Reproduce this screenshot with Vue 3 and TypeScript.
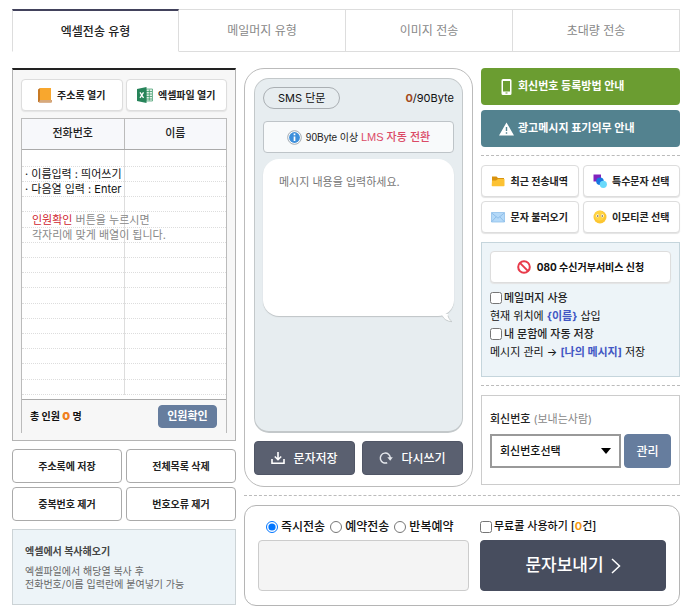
<script setup lang="ts">
import { ref } from 'vue'

const tabs: string[] = ['엑셀전송 유형', '메일머지 유형', '이미지 전송', '초대량 전송']
const activeTab = ref(0)
const listActions: string[] = ['주소록에 저장', '전체목록 삭제', '중복번호 제거', '번호오류 제거']
const sendModes: string[] = ['즉시전송', '예약전송', '반복예약']
const sendMode = ref('즉시전송')
const mailMerge = ref(false)
const autoSave = ref(false)
const freeCall = ref(false)
const message = ref('')
const sender = ref('')
const rowCount = 16
</script>

<template>
  <div class="page">
    <nav class="tabs">
      <button
        v-for="(tab, i) in tabs"
        :key="tab"
        type="button"
        class="tab"
        :class="{ active: i === activeTab }"
        @click="activeTab = i"
      >{{ tab }}</button>
    </nav>

    <main class="layout">
      <section class="left">
        <div class="book">
          <div class="pair tight">
            <button type="button" class="btn soft">
              <svg width="14" height="15" viewBox="0 0 14 15">
                <path d="M2 0h11v14H2z" fill="#f8a72e" />
                <path d="M0 1.5 2 0v13L0 14z" fill="#c87a24" />
                <path d="M0 13.2 2 12h11.6v2.6H1z" fill="#b96c26" />
                <path d="M2 12.6h11v1H1z" fill="#f6e6cf" />
              </svg>
              주소록 열기
            </button>
            <button type="button" class="btn soft">
              <svg width="16" height="16" viewBox="0 0 16 16">
                <path d="M9 2h6.500v12H9z" fill="#e3f1e9" stroke="#3b9a68" stroke-width=".7" />
                <path d="M9 4.500h6M9 7h6M9 9.500h6M9 12h6M12.300 2.500v11" stroke="#3b9a68" stroke-width=".8" />
                <path d="M0 2 9.500 0v16L0 14z" fill="#27845a" />
                <path d="m3 5.300 3.500 5.500M6.500 5.300 3 10.800" stroke="#fff" stroke-width="1.300" />
              </svg>
              엑셀파일 열기
            </button>
          </div>

          <div class="sheet">
            <table>
              <thead>
                <tr><th scope="col">전화번호</th><th scope="col">이름</th></tr>
              </thead>
              <tbody>
                <tr v-for="n in rowCount" :key="n"><td></td><td></td></tr>
              </tbody>
            </table>
            <div class="hint">
              <p>· 이름입력 : 띄어쓰기</p>
              <p>· 다음열 입력 : Enter</p>
              <p class="sub gap"><em>인원확인</em> 버튼을 누르시면</p>
              <p class="sub">각자리에 맞게 배열이 됩니다.</p>
            </div>
            <div class="total">
              <strong>총 인원 <b>0</b> 명</strong>
              <button type="button" class="btn blue count">인원확인</button>
            </div>
          </div>
        </div>

        <div class="pair actions">
          <button v-for="a in listActions" :key="a" type="button" class="btn line">{{ a }}</button>
        </div>

        <aside class="paste">
          <h3>엑셀에서 복사해오기</h3>
          <p>엑셀파일에서 해당열 복사 후<br />전화번호/이름 입력란에 붙여넣기 가능</p>
        </aside>
      </section>

      <section class="right">
        <div class="upper">
          <div class="phone">
            <div class="screen">
              <div class="status">
                <span class="pill">SMS 단문</span>
                <span class="bytes"><b>0</b>/90Byte</span>
              </div>
              <div class="notice">
                <svg width="15" height="15" viewBox="0 0 15 15">
                  <circle cx="7.500" cy="7.500" r="6.800" fill="#fff" stroke="#8c969e" stroke-width=".8" />
                  <circle cx="7.500" cy="7.500" r="5.400" fill="#3d8fdb" />
                  <path d="M7.500 6.500v4.500M7.500 3.600v1.700" stroke="#fff" stroke-width="1.700" />
                </svg>
                <span>90Byte 이상 <b>LMS 자동 전환</b></span>
              </div>
              <div class="bubble">
                <textarea v-model="message" aria-label="메시지 내용" placeholder="메시지 내용을 입력하세요."></textarea>
                <svg class="tail" width="13" height="9" viewBox="0 0 13 9">
                  <path d="M0 0c2 4.500 5 7 11 7.500C8.500 5.500 7 3 7 0z" fill="#fff" />
                  <path d="M1 1.500c2 4 5 5.800 10 6.200C8.800 6 7.200 3.500 7 1.500" fill="none" stroke="#c3c8ca" stroke-width=".9" />
                </svg>
              </div>
            </div>
            <div class="phone-actions">
              <button type="button" class="btn dark">
                <svg width="14" height="14" viewBox="0 0 14 14" fill="none" stroke="#fff" stroke-width="1.600">
                  <path d="M1 8v4.200h12V8M7 1v7.500M3.800 5.500 7 8.700l3.200-3.200" />
                </svg>
                문자저장
              </button>
              <button type="button" class="btn dark">
                <svg width="14" height="14" viewBox="0 0 14 14" fill="none" stroke="#e4e7ec" stroke-width="1.500">
                  <path d="M8.200 11.700A5 5 0 1 1 11.300 7" />
                  <path d="M8.300 6.200h5.500L11.200 9.800z" fill="#e4e7ec" stroke="none" />
                </svg>
                다시쓰기
              </button>
            </div>
          </div>

          <div class="side">
            <div class="guides">
              <a href="#" class="guide green">
                <svg width="15" height="16" viewBox="0 0 15 16">
                  <path fill-rule="evenodd" d="M4 0h7a1.500 1.500 0 0 1 1.500 1.500v13A1.500 1.500 0 0 1 11 16H4a1.500 1.500 0 0 1-1.500-1.500v-13A1.500 1.500 0 0 1 4 0zm0 2v10.500h7V2zm2.500 11.500v1h2v-1z" fill="#fff" />
                </svg>
                회신번호 등록방법 안내
              </a>
              <a href="#" class="guide teal">
                <svg width="15" height="14" viewBox="0 0 15 14">
                  <path fill-rule="evenodd" d="M7.500.5 15 13.500H0zM6.800 5v4h1.400V5zm0 5.200v1.500h1.400v-1.500z" fill="#fff" />
                </svg>
                광고메시지 표기의무 안내
              </a>
            </div>

            <hr />

            <div class="pair tools">
              <button type="button" class="btn soft">
                <svg width="14" height="14" viewBox="0 0 14 14">
                  <path d="M1 2.500h4.500L7 4h6v3H1z" fill="#d9930f" />
                  <path d="M1 6.500h4L7 5h6.500v6.500a.8.8 0 0 1-.8.8H1.500a.8.8 0 0 1-.8-.8z" fill="#fcc233" />
                </svg>
                최근 전송내역
              </button>
              <button type="button" class="btn soft">
                <svg width="14" height="14" viewBox="0 0 14 14">
                  <path d="M.5.5h7.500v7H.5z" fill="#8224bd" />
                  <circle cx="7" cy="7.200" r="3.800" fill="#1878e0" />
                  <circle cx="10.300" cy="10.300" r="3.600" fill="#69d9fb" />
                </svg>
                특수문자 선택
              </button>
              <button type="button" class="btn soft">
                <svg width="14" height="14" viewBox="0 0 14 14">
                  <path d="M.5 2.500h13v9.500H.5z" fill="#b4d9f8" stroke="#8fc0ea" stroke-width=".8" />
                  <path d="M.7 3 7 8.200 13.300 3M.7 11.700 5.200 6.800M13.300 11.700 8.800 6.800" fill="none" stroke="#7fb3e2" stroke-width=".7" />
                </svg>
                문자 불러오기
              </button>
              <button type="button" class="btn soft">
                <svg width="14" height="14" viewBox="0 0 14 14">
                  <circle cx="7" cy="7" r="6.500" fill="#fcc632" />
                  <circle cx="6.300" cy="5.800" r="5" fill="#ffd443" />
                  <ellipse cx="4.600" cy="5.800" rx="1.400" ry="1.600" fill="#fff" />
                  <ellipse cx="9.400" cy="5.800" rx="1.400" ry="1.600" fill="#fff" />
                  <circle cx="4.700" cy="6" r=".8" fill="#5b4a2a" />
                  <circle cx="9.300" cy="6" r=".8" fill="#5b4a2a" />
                </svg>
                이모티콘 선택
              </button>
            </div>

            <div class="options">
              <button type="button" class="btn soft reject">
                <svg width="14" height="14" viewBox="0 0 14 14" fill="none" stroke="#e83a4a" stroke-width="2">
                  <circle cx="7" cy="7" r="5.800" />
                  <path d="m2.900 2.900 8.200 8.200" />
                </svg>
                080 수신거부서비스 신청
              </button>
              <label class="check"><input v-model="mailMerge" type="checkbox" />메일머지 사용</label>
              <p>현재 위치에 <b>{이름}</b> 삽입</p>
              <label class="check"><input v-model="autoSave" type="checkbox" />내 문함에 자동 저장</label>
              <p>메시지 관리 → <b>[나의 메시지]</b> 저장</p>
            </div>

            <hr />

            <div class="sender">
              <label for="sender">회신번호 <span>(보내는사람)</span></label>
              <div class="sender-row">
                <div class="select">
                  <select id="sender" v-model="sender">
                    <option value="">회신번호선택</option>
                  </select>
                  <svg width="10" height="6" viewBox="0 0 10 6"><path d="M0 0h10L5 6z" fill="#000" /></svg>
                </div>
                <button type="button" class="btn blue manage">관리</button>
              </div>
            </div>
          </div>
        </div>

        <hr />

        <div class="send">
          <div class="when">
            <div class="modes">
              <label v-for="m in sendModes" :key="m">
                <input v-model="sendMode" type="radio" name="mode" :value="m" />{{ m }}
              </label>
            </div>
            <input class="reserve" type="text" aria-label="예약 시간" disabled />
          </div>
          <div class="go">
            <label class="free"><input v-model="freeCall" type="checkbox" /><span>무료콜 사용하기 [<b>0</b>건]</span></label>
            <button type="button" class="btn submit">
              문자보내기
              <svg width="10" height="16" viewBox="0 0 10 16" fill="none" stroke="#fff" stroke-width="1.500"><path d="m1 1 7.500 7L1 15" /></svg>
            </button>
          </div>
        </div>
      </section>
    </main>
  </div>
</template>

<style>
body {
  background: #fff;
}
</style>

<style scoped>
.page,
.page * {
  box-sizing: border-box;
}
.page {
  padding: 9px 10px 10px 12px;
  color: #222;
  font-family: Inter, "Noto Sans CJK KR", sans-serif;
  font-size: 11px;
  line-height: 17px;
}
button,
input,
select,
textarea {
  margin: 0;
  font: inherit;
  color: inherit;
}
p,
h3 {
  margin: 0;
}
svg {
  flex: none;
}
.tabs {
  display: grid;
  grid-template-columns: repeat(4, 1fr);
}
.tab {
  height: 43px;
  padding: 0;
  border: 1px solid #ddd;
  border-left-width: 0;
  background: #fff;
  color: #888;
  font-size: 12px;
}
.tab.active {
  border-top: 2px solid #42425c;
  border-left-width: 1px;
  border-bottom-color: transparent;
  color: #222;
  font-weight: 500;
}
.layout {
  display: grid;
  grid-template-columns: 224fr 436fr;
  align-items: start;
  gap: 8px;
  margin-top: 16px;
}
.btn {
  display: flex;
  align-items: center;
  justify-content: center;
  padding: 0;
  border: 1px solid #ddd;
  border-radius: 4px;
  background: #fff;
  font-size: 11px;
  font-weight: 500;
  white-space: nowrap;
  cursor: pointer;
}
.btn.soft {
  gap: 5px;
  height: 32px;
  font-size: 10px;
  font-weight: 700;
  box-shadow: 0 1px 1px #e4e4e4;
}
.btn.blue {
  border-color: #667d9e;
  background: #667d9e;
  color: #fff;
  font-weight: 700;
}
.btn.line {
  height: 34px;
  border-color: #aaa;
  font-size: 10px;
  font-weight: 700;
}
.pair {
  display: grid;
  grid-template-columns: 1fr 1fr;
  gap: 4px;
}
.pair.tight {
  gap: 3px;
}
.book {
  padding: 9px 8px 7px;
  border: 1px solid #b4b4b4;
  border-top: 2px solid #222;
  background: #f7f7f7;
}
.sheet {
  position: relative;
  margin-top: 7px;
  border: 1px solid #bbb;
  border-bottom: 0;
  background: #fff;
}
table {
  width: 100%;
  height: 276px;
  border-collapse: collapse;
}
th {
  width: 50%;
  height: 30px;
  padding: 0;
  border-bottom: 1px solid #aaa;
  background: #f7f8fb;
  font-weight: 500;
}
th + th {
  border-left: 1px solid #bbb;
}
td {
  height: 15px;
  padding: 0;
  border-bottom: 1px dotted #ddd;
}
tr:first-child td {
  height: 17px;
}
td + td {
  border-left: 1px solid #ddd;
}
.hint {
  position: absolute;
  top: 48px;
  left: 3px;
  color: #111;
  line-height: 15px;
  white-space: nowrap;
}
.hint .sub {
  padding-left: 7px;
  color: #888;
}
.hint .gap {
  margin-top: 16px;
}
.hint em {
  color: #cf2530;
  font-style: normal;
}
.total {
  display: flex;
  align-items: center;
  justify-content: space-between;
  height: 34px;
  margin-top: 4px;
  padding: 0 9px 0 8px;
  border-top: 1px solid #aaa;
  background: #f7f7f7;
  color: #111;
  font-size: 10px;
}
.total strong {
  white-space: pre;
}
.total b {
  color: #f08020;
  font-size: 11px;
}
.btn.count {
  width: 59px;
  height: 23px;
}
.actions {
  margin-top: 8px;
}
.paste {
  margin-top: 8px;
  padding: 13px 12px;
  border: 1px solid #ccd3d6;
  background: #edf4f8;
  color: #666;
  font-size: 10px;
  line-height: 13px;
}
.paste h3 {
  margin-bottom: 6px;
  color: #444;
  font-size: 10px;
  font-weight: 700;
  line-height: 16px;
}
.upper {
  display: grid;
  grid-template-columns: 229fr 199fr;
  gap: 8px;
}
.side {
  padding-bottom: 2px;
}
hr {
  height: 0;
  margin: 8px 0 9px;
  border: 0;
  border-top: 1px dashed #bbb;
}
.phone {
  display: flex;
  flex-direction: column;
  padding: 9px 9px 11px;
  border: 1px solid #bbb;
  border-radius: 20px;
}
.screen {
  flex: 1;
  padding: 8px;
  border: 1px solid #c3c8ca;
  border-bottom-width: 2px;
  border-radius: 15px;
  background: #e7edf0;
}
.status {
  display: flex;
  align-items: center;
  justify-content: space-between;
  color: #111;
}
.pill {
  padding: 1px 14px;
  border: 1px solid #aaafb3;
  border-radius: 11px;
  line-height: 18px;
}
.bytes b {
  color: #a34a1c;
}
.notice {
  display: flex;
  align-items: center;
  justify-content: center;
  gap: 4px;
  height: 32px;
  margin-top: 12px;
  border: 1px solid #bec4c8;
  border-radius: 4px;
  background: #f8fafb;
  font-family: "Liberation Sans", "Noto Sans CJK KR", sans-serif;
  font-size: 10px;
  white-space: nowrap;
}
.notice b {
  color: #db4a66;
  font-size: 11px;
  font-weight: 500;
}
.bubble {
  position: relative;
  height: 157px;
  margin-top: 6px;
  border-radius: 16px;
  background: #fff;
  box-shadow: 0 1px 1px #bfc4c6;
}
textarea {
  display: block;
  width: 100%;
  height: 100%;
  padding: 15px 16px;
  border: 0;
  border-radius: 16px;
  background: transparent;
  resize: none;
}
textarea::placeholder {
  color: #777;
  opacity: 1;
}
.tail {
  position: absolute;
  right: 0;
  bottom: -7px;
}
.phone-actions {
  display: grid;
  grid-template-columns: 1fr 1fr;
  gap: 7px;
  margin-top: 8px;
}
.btn.dark {
  gap: 8px;
  height: 34px;
  border-color: #505666;
  background: #5a6070;
  color: #fff;
  font-size: 12px;
}
.guides {
  display: grid;
  gap: 5px;
}
.guide {
  display: flex;
  align-items: center;
  gap: 4px;
  height: 37px;
  padding-left: 18px;
  border-radius: 4px;
  color: #fff;
  font-weight: 700;
  text-decoration: none;
}
.green {
  background: #6b9d31;
}
.teal {
  background: #53828f;
}
.options {
  margin-top: 9px;
  padding: 8px 8px 15px;
  border: 1px solid #c5d5dc;
  background: #edf4f8;
}
.btn.reject {
  gap: 6px;
  width: 100%;
  margin-bottom: 6px;
  color: #111;
}
.check {
  display: flex;
  align-items: center;
  gap: 2px;
  font-weight: 500;
  line-height: 18px;
}
.check input,
.free input,
.modes input {
  width: 12px;
  height: 12px;
}
.options p {
  color: #111;
  line-height: 18px;
  white-space: nowrap;
}
.options b {
  color: #4257c4;
  font-weight: 700;
}
.sender {
  padding: 15px 8px 16px;
  border: 1px solid #ccc;
}
.sender label {
  font-weight: 500;
}
.sender label span {
  color: #888;
  font-weight: 400;
}
.sender-row {
  display: flex;
  gap: 3px;
  margin-top: 6px;
}
.select {
  position: relative;
  flex: 1;
}
.select select {
  display: block;
  width: 100%;
  height: 34px;
  padding: 0 8px;
  border: 2px solid #999;
  border-radius: 0;
  background: #fff;
  color: #111;
  font-weight: 500;
  appearance: none;
}
.select svg {
  position: absolute;
  top: 14px;
  right: 10px;
  pointer-events: none;
}
.btn.manage {
  width: 47px;
  height: 34px;
  font-size: 12px;
  font-weight: 500;
}
.send {
  display: grid;
  grid-template-columns: 211fr 186fr;
  gap: 11px;
  padding: 12px 13px 14px;
  border: 1px solid #b5b5b5;
  border-radius: 12px;
}
.modes,
.free {
  display: flex;
  align-items: center;
  height: 17px;
  color: #111;
  font-weight: 500;
  white-space: nowrap;
}
.modes {
  gap: 5px;
  padding-left: 8px;
  font-size: 12px;
}
.modes label {
  display: flex;
  align-items: center;
  gap: 3px;
}
.free {
  gap: 2px;
}
.free b {
  color: #f59a12;
}
.reserve {
  display: block;
  width: 100%;
  height: 51px;
  margin-top: 5px;
  border: 1px solid #ccc;
  border-radius: 4px;
  background: #f4f4f4;
}
.btn.submit {
  gap: 7px;
  width: 100%;
  height: 51px;
  margin-top: 5px;
  border-color: #474d5e;
  background: #474d5e;
  color: #fff;
  font-size: 17px;
}
</style>
